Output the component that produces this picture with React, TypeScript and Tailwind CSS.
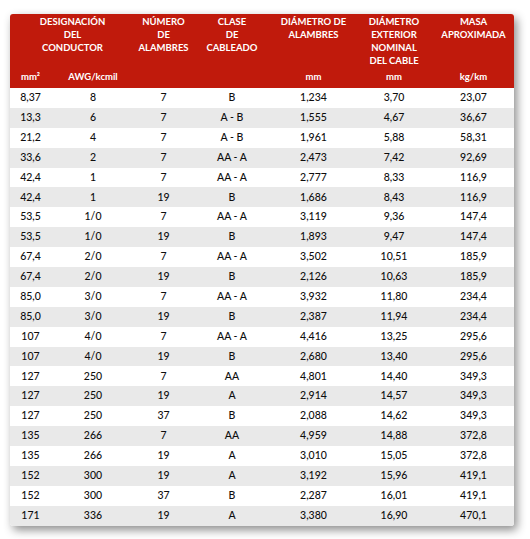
import React from "react";

const rows: string[][] = [
  ["8,37", "8", "7", "B", "1,234", "3,70", "23,07"],
  ["13,3", "6", "7", "A - B", "1,555", "4,67", "36,67"],
  ["21,2", "4", "7", "A - B", "1,961", "5,88", "58,31"],
  ["33,6", "2", "7", "AA - A", "2,473", "7,42", "92,69"],
  ["42,4", "1", "7", "AA - A", "2,777", "8,33", "116,9"],
  ["42,4", "1", "19", "B", "1,686", "8,43", "116,9"],
  ["53,5", "1/0", "7", "AA - A", "3,119", "9,36", "147,4"],
  ["53,5", "1/0", "19", "B", "1,893", "9,47", "147,4"],
  ["67,4", "2/0", "7", "AA - A", "3,502", "10,51", "185,9"],
  ["67,4", "2/0", "19", "B", "2,126", "10,63", "185,9"],
  ["85,0", "3/0", "7", "AA - A", "3,932", "11,80", "234,4"],
  ["85,0", "3/0", "19", "B", "2,387", "11,94", "234,4"],
  ["107", "4/0", "7", "AA - A", "4,416", "13,25", "295,6"],
  ["107", "4/0", "19", "B", "2,680", "13,40", "295,6"],
  ["127", "250", "7", "AA", "4,801", "14,40", "349,3"],
  ["127", "250", "19", "A", "2,914", "14,57", "349,3"],
  ["127", "250", "37", "B", "2,088", "14,62", "349,3"],
  ["135", "266", "7", "AA", "4,959", "14,88", "372,8"],
  ["135", "266", "19", "A", "3,010", "15,05", "372,8"],
  ["152", "300", "19", "A", "3,192", "15,96", "419,1"],
  ["152", "300", "37", "B", "2,287", "16,01", "419,1"],
  ["171", "336", "19", "A", "3,380", "16,90", "470,1"],
];

const widths = ["w-[41px]", "w-[84px]", "w-[57px]", "w-[80px]", "w-[83px]", "w-[78px]", "w-[81px]"];

export default function App() {
  return (
    <div className="w-[530px] h-[539px] bg-white pt-[14px] pl-[10px]" style={{ fontFamily: "Lato, 'Open Sans', sans-serif" }}>
      <div className="w-[504px] rounded-[3px] overflow-hidden bg-white shadow-[3px_4px_10px_rgba(0,0,0,0.45)]">
        <div className="bg-[#c01a0c] text-white font-bold text-[9.5px] leading-[13px] h-[74px] flex flex-col">
          <div className="flex pt-[1px]">
            <div className="w-[125px] text-center">DESIGNACIÓN<br />DEL<br />CONDUCTOR</div>
            <div className="w-[57px] text-center">NÚMERO<br />DE<br />ALAMBRES</div>
            <div className="w-[80px] text-center">CLASE<br />DE<br />CABLEADO</div>
            <div className="w-[83px] text-center">DIÁMETRO DE<br />ALAMBRES</div>
            <div className="w-[78px] text-center">DIÁMETRO<br />EXTERIOR<br />NOMINAL<br />DEL CABLE</div>
            <div className="w-[81px] text-center">MASA<br />APROXIMADA</div>
          </div>
          <div className="flex mt-[3px]">
            <div className={`${widths[0]} text-center`}>mm²</div>
            <div className={`${widths[1]} text-center`}>AWG/kcmil</div>
            <div className={`${widths[2]}`}></div>
            <div className={`${widths[3]}`}></div>
            <div className={`${widths[4]} text-center`}>mm</div>
            <div className={`${widths[5]} text-center`}>mm</div>
            <div className={`${widths[6]} text-center`}>kg/km</div>
          </div>
        </div>
        <div className="text-[10.5px] text-[#0d0d0d] font-medium">
          {rows.map((r, i) => (
            <div key={i} className={`flex items-center h-[19.9px] ${i % 2 === 1 ? "bg-[#e9e9e9]" : "bg-white"}`}>
              {r.map((c, j) => (
                <div key={j} className={`${widths[j]} text-center`}>{c}</div>
              ))}
            </div>
          ))}
        </div>
      </div>
    </div>
  );
}
